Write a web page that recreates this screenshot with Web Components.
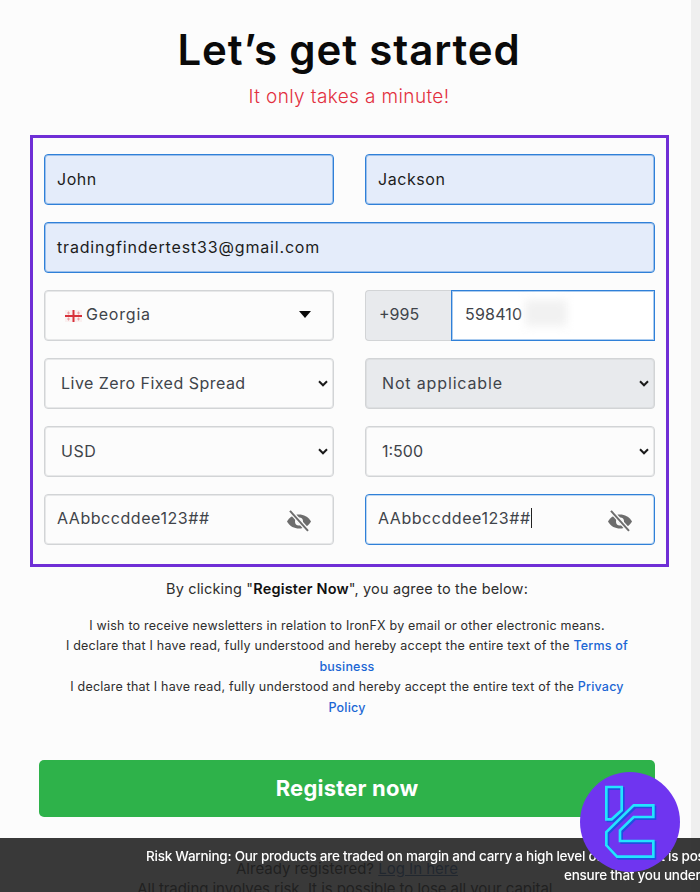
<!DOCTYPE html>
<html lang="en">
<head>
<meta charset="utf-8">
<title>Let's get started</title>
<style>
  html, body { margin: 0; height: 892px; overflow: hidden; background: #fcfcfc; }
  body { font-family: Inter, "Noto Sans", sans-serif; }
</style>
</head>
<body>
<reg-page>
  <reg-heading title-text="Let’s get started" sub="It only takes a minute!"></reg-heading>
  <reg-form>
    <reg-field state="autofill">John</reg-field>
    <reg-field state="autofill">Jackson</reg-field>
    <reg-field state="autofill" wide style="letter-spacing:.83px">tradingfindertest33@gmail.com</reg-field>
    <country-field>Georgia</country-field>
    <phone-field code="+995">598410</phone-field>
    <reg-field select style="letter-spacing:.48px">Live Zero Fixed Spread</reg-field>
    <reg-field select state="muted" style="letter-spacing:.85px">Not applicable</reg-field>
    <reg-field select>USD</reg-field>
    <reg-field select style="letter-spacing:0">1:500</reg-field>
    <reg-field password>AAbbccddee123##</reg-field>
    <reg-field password state="focus" caret>AAbbccddee123##</reg-field>
  </reg-form>
  <legal-note></legal-note>
  <reg-button>Register now</reg-button>
  <login-foot></login-foot>
</reg-page>
<risk-bar></risk-bar>
<brand-badge></brand-badge>

<script>
class RegPage extends HTMLElement {
  constructor() {
    super();
    this.attachShadow({ mode: 'open' }).innerHTML = `
      <style>
        :host { display: flex; height: 892px; overflow: hidden; }
        main { width: 691px; flex: none; }
        .rail { flex: 1; background: #efefef; }
      </style>
      <main><slot></slot></main>
      <div class="rail"></div>`;
  }
}

class RegHeading extends HTMLElement {
  constructor() {
    super();
    this.attachShadow({ mode: 'open' }).innerHTML = `
      <style>
        :host { display: block; padding-top: 26px; margin-bottom: 26px; text-align: center; width: 698px; }
        h1 { margin: 0 0 11px; font: 600 42px/48px Inter, sans-serif; color: #0a0a0a; letter-spacing: .87px; }
        p { margin: 0; font: 300 19px/24px Inter, sans-serif; color: #e2303f; letter-spacing: .38px; }
      </style>
      <h1>${this.getAttribute('title-text')}</h1>
      <p>${this.getAttribute('sub')}</p>`;
  }
}

class RegForm extends HTMLElement {
  constructor() {
    super();
    this.attachShadow({ mode: 'open' }).innerHTML = `
      <style>
        :host {
          display: grid; grid-template-columns: 290px 290px; column-gap: 31px; row-gap: 17px;
          width: 611px; margin-left: 30px; padding: 16px 11px 19px;
          border: 3px solid #6f2fd6;
        }
      </style>
      <slot></slot>`;
  }
}

class RegField extends HTMLElement {
  constructor() {
    super();
    const select = this.hasAttribute('select');
    const password = this.hasAttribute('password');
    const eye = password ? `
      <svg class="eye" width="26" height="22" viewBox="0 0 26 22">
        <path fill="#6d6d6d" d="M1 11.5C4 6.5 8.200 4.500 13 4.500s9 2 12 7c-3 5-7.200 7-12 7s-9-2-12-7z"/>
        <circle cx="13" cy="11.500" r="4" fill="#fcfcfc"/>
        <circle cx="13.500" cy="11.500" r="2" fill="#6d6d6d"/>
        <path d="M4 .8l18 20" stroke="#fcfcfc" stroke-width="4.500"/>
        <path d="M4 .8l18 20" stroke="#6d6d6d" stroke-width="2"/>
      </svg>` : '';
    const chevron = select ? `
      <svg class="chev" width="10" height="7" viewBox="0 0 10 7">
        <path d="M1 1.300l4 4 4-4" fill="none" stroke="#1a1a1a" stroke-width="2"/>
      </svg>` : '';
    this.attachShadow({ mode: 'open' }).innerHTML = `
      <style>
        :host {
          display: flex; align-items: center; box-sizing: border-box; height: 51px;
          padding: 0 0 2px 12px; border: 1px solid #d2d4d6; border-radius: 4px;
          box-shadow: inset 0 0 0 1px rgba(210, 212, 214, .5);
          background: #fcfcfc; color: #3f444a;
          font: 400 16px/24px Inter, sans-serif; letter-spacing: .55px; white-space: nowrap;
        }
        :host([wide]) { grid-column: 1 / -1; }
        :host([select]) { padding-left: 16px; }
        :host([password]) { padding-bottom: 3px; }
        :host([state="autofill"]) { background: #e4ecfa; border-color: #2f80d8; color: #1c1c1c; box-shadow: inset 0 0 0 1px rgba(47, 128, 216, .4); }
        :host([state="focus"]) { border-color: #2f80d8; box-shadow: inset 0 0 0 1px rgba(47, 128, 216, .3); }
        :host([state="muted"]) { background: #e8eaed; }
        .txt { flex: 1; }
        .caret { display: inline-block; width: 1px; height: 20px; background: #222; vertical-align: -4px; }
        .chev { margin: 2px 5px 0 0; }
        .eye { margin: 5px 21px 0 0; }
      </style>
      <span class="txt"><slot></slot>${this.hasAttribute('caret') ? '<span class="caret"></span>' : ''}</span>
      ${chevron}${eye}`;
  }
}

class CountryField extends HTMLElement {
  constructor() {
    super();
    this.attachShadow({ mode: 'open' }).innerHTML = `
      <style>
        :host {
          display: flex; align-items: center; gap: 4px; box-sizing: border-box; height: 51px;
          padding: 0 22px 3px 20px; border: 1px solid #d2d4d6; border-radius: 4px;
          box-shadow: inset 0 0 0 1px rgba(210, 212, 214, .5);
          background: #fcfcfc; color: #3f444a;
          font: 400 16px/24px Inter, sans-serif; letter-spacing: .8px;
        }
        .txt { flex: 1; }
        .flag { margin-top: 3px; }
        .arrow { width: 0; height: 0; margin-top: 1px; border: 6.500px solid transparent; border-top: 7px solid #0a0a0a; border-bottom: 0; }
      </style>
      <svg class="flag" width="17" height="12" viewBox="0 0 17 12">
        <rect width="17" height="12" fill="#faf0f0"/>
        <path d="M8.500 0v12M0 6h17" stroke="#d8303a" stroke-width="2"/>
        <path d="M3.500 1.500v3M2 3h3M13.500 1.500v3M12 3h3M3.500 7.500v3M2 9h3M13.500 7.500v3M12 9h3" stroke="#eba0a4" stroke-width="1"/>
      </svg>
      <span class="txt"><slot></slot></span>
      <span class="arrow"></span>`;
  }
}

class PhoneField extends HTMLElement {
  constructor() {
    super();
    this.attachShadow({ mode: 'open' }).innerHTML = `
      <style>
        :host {
          display: flex; box-sizing: border-box; height: 51px;
          font: 400 16px/24px Inter, sans-serif; color: #3f444a;
        }
        .code {
          width: 86px; flex: none; box-sizing: border-box; display: flex; align-items: center; padding: 0 0 3px 13px;
          background: #e8eaed; border: 1px solid #d2d4d6; border-right: 0; border-radius: 4px 0 0 4px;
          letter-spacing: 0;
        }
        .num {
          flex: 1; position: relative; display: flex; align-items: center; padding: 0 0 3px 13px;
          background: #fff; border: 1px solid #2f80d8; box-shadow: inset 0 0 0 1px rgba(47, 128, 216, .4); letter-spacing: .2px;
        }
        .smudge {
          position: absolute; left: 73px; top: 9px; width: 42px; height: 26px;
          background: #f1f1f1; filter: blur(5px);
        }
      </style>
      <div class="code">${this.getAttribute('code')}</div>
      <div class="num"><slot></slot><span class="smudge"></span></div>`;
  }
}

class LegalNote extends HTMLElement {
  constructor() {
    super();
    this.attachShadow({ mode: 'open' }).innerHTML = `
      <style>
        :host { display: block; width: 616px; margin: 12px 0 42px 39px; text-align: center; color: #2e2e2e; white-space: nowrap; }
        .lead { font: 400 14.500px/20px Inter, sans-serif; letter-spacing: .17px; margin: 0 0 17px; }
        .lead b { font-weight: 600; color: #111; }
        .body { font: 400 12.500px/20.400px Inter, sans-serif; letter-spacing: .21px; margin: 0; }
        a { color: #1b66d4; text-decoration: none; font-weight: 500; }
      </style>
      <p class="lead">By clicking "<b>Register Now</b>", you agree to the below:</p>
      <p class="body">I wish to receive newsletters in relation to IronFX by email or other electronic means.<br>
      I declare that I have read, fully understood and hereby accept the entire text of the <a href="#">Terms of</a><br>
      <a href="#">business</a><br>
      I declare that I have read, fully understood and hereby accept the entire text of the <a href="#">Privacy</a><br>
      <a href="#">Policy</a></p>`;
  }
}

class RegButton extends HTMLElement {
  constructor() {
    super();
    this.attachShadow({ mode: 'open' }).innerHTML = `
      <style>
        :host {
          display: flex; align-items: center; justify-content: center;
          width: 616px; height: 57px; margin-left: 39px; border-radius: 5px; padding-bottom: 2px; box-sizing: border-box;
          background: #2eb24a; color: #fff; font: 700 22px/28px Inter, sans-serif; letter-spacing: .2px;
        }
      </style>
      <slot></slot>`;
  }
}

class LoginFoot extends HTMLElement {
  constructor() {
    super();
    this.attachShadow({ mode: 'open' }).innerHTML = `
      <style>
        :host { display: block; width: 616px; margin: 42px 0 0 39px; text-align: center; color: #000; font: 400 15px/20px Inter, sans-serif; white-space: nowrap; }
        p { margin: 0; }
        a { color: #0d4d9c; text-decoration: underline; }
      </style>
      <p>Already registered? <a href="#">Log In here</a></p>
      <p style="letter-spacing:-.06px">All trading involves risk. It is possible to lose all your capital.</p>`;
  }
}

class RiskBar extends HTMLElement {
  constructor() {
    super();
    this.attachShadow({ mode: 'open' }).innerHTML = `
      <style>
        :host {
          position: fixed; left: 0; right: 0; bottom: 0; height: 54px; overflow: hidden;
          background: rgba(36, 36, 36, .9); color: #fff; padding-top: 9px; box-sizing: border-box;
          font: 500 13.500px/19px Inter, sans-serif; white-space: nowrap; letter-spacing: -.25px;
        }
        div { padding-left: 146px; }
        div + div { padding-left: 564px; }
      </style>
      <div>Risk Warning: Our products are traded on margin and carry a high level of risk and it is possible to lose all your capital.</div>
      <div>ensure that you understand the risks involved.</div>`;
  }
}

class BrandBadge extends HTMLElement {
  constructor() {
    super();
    this.attachShadow({ mode: 'open' }).innerHTML = `
      <style>
        :host { position: fixed; left: 580px; top: 772px; width: 100px; height: 100px; display: block; }
        svg { display: block; }
      </style>
      <svg width="100" height="100" viewBox="30 30 300 300">
        <circle cx="180" cy="180" r="150" fill="#6f35f0"/>
        <g fill="none" stroke-linejoin="miter">
          <g stroke="#1f4fe0" stroke-width="8" transform="translate(5 5)">
            <path d="M109 75H155V145L125 172H109z"/>
            <path d="M191 130H250V165H191L150 205V237H250V284H141L109 250V210z"/>
          </g>
          <g stroke="#22e4ff" stroke-width="8">
            <path d="M109 75H155V145L125 172H109z"/>
            <path d="M191 130H250V165H191L150 205V237H250V284H141L109 250V210z"/>
          </g>
        </g>
      </svg>`;
  }
}

customElements.define('reg-page', RegPage);
customElements.define('reg-heading', RegHeading);
customElements.define('reg-form', RegForm);
customElements.define('reg-field', RegField);
customElements.define('country-field', CountryField);
customElements.define('phone-field', PhoneField);
customElements.define('legal-note', LegalNote);
customElements.define('reg-button', RegButton);
customElements.define('login-foot', LoginFoot);
customElements.define('risk-bar', RiskBar);
customElements.define('brand-badge', BrandBadge);
</script>
</body>
</html>
